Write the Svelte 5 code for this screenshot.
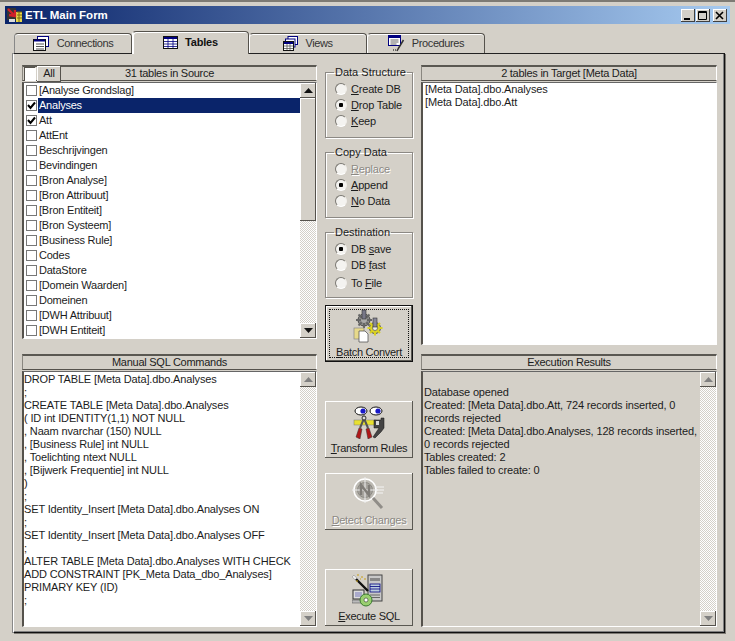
<script>
  const tables = [
    ['[Analyse Grondslag]', false], ['Analyses', true], ['Att', true], ['AttEnt', false],
    ['Beschrijvingen', false], ['Bevindingen', false], ['[Bron Analyse]', false], ['[Bron Attribuut]', false],
    ['[Bron Entiteit]', false], ['[Bron Systeem]', false], ['[Business Rule]', false], ['Codes', false],
    ['DataStore', false], ['[Domein Waarden]', false], ['Domeinen', false], ['[DWH Attribuut]', false], ['[DWH Entiteit]', false]
  ];
  const sql = ['DROP TABLE [Meta Data].dbo.Analyses', ';', 'CREATE TABLE [Meta Data].dbo.Analyses', '( ID int IDENTITY(1,1) NOT NULL', ', Naam nvarchar (150) NULL', ', [Business Rule] int NULL', ', Toelichting ntext NULL', ', [Bijwerk Frequentie] int NULL', ')', ';', 'SET Identity_Insert [Meta Data].dbo.Analyses ON', ';', 'SET Identity_Insert [Meta Data].dbo.Analyses OFF', ';', 'ALTER TABLE [Meta Data].dbo.Analyses WITH CHECK', 'ADD CONSTRAINT [PK_Meta Data_dbo_Analyses]', 'PRIMARY KEY (ID)', ';'];
  const results = ['', 'Database opened', 'Created: [Meta Data].dbo.Att, 724 records inserted, 0', 'records rejected', 'Created: [Meta Data].dbo.Analyses, 128 records inserted,', '0 records rejected', 'Tables created: 2', 'Tables failed to create: 0'];
</script>

{#snippet arrow(dir, off)}
  <span class="sbtn" class:off>
    <svg width="9" height="5" viewBox="0 0 9 5">
      {#if dir === 'up'}<path d="M4.5 0 L9 5 H0 Z" fill={off ? '#808080' : '#111'} />
      {:else}<path d="M0 0 H9 L4.5 5 Z" fill={off ? '#808080' : '#111'} />{/if}
    </svg>
  </span>
{/snippet}

{#snippet radio(on, dis, pre, key, post, cls = '')}
  <div class="radio {cls}" class:dis>
    <span class="dot" class:on></span>
    <span class="rlabel">{pre}<u>{key}</u>{post}</span>
  </div>
{/snippet}

<div class="window">
  <header class="title">
    <svg class="appicon" width="16" height="16" viewBox="0 0 16 16">
      <rect x="0" y="1" width="9" height="12" fill="#333" />
      <rect x="9" y="5" width="6" height="10" fill="#e8d84a" />
      <path d="M10 5h5M10 8h5M10 11h5M12 5v10" stroke="#7a6a10" stroke-width="1" />
      <path d="M1 2 L8 9 M2 8 L8 9 L8 3" stroke="#d0202a" stroke-width="2.4" fill="none" />
      <rect x="2" y="12" width="6" height="3" fill="#ddd" />
    </svg>
    <span class="ttext">ETL Main Form</span>
    <div class="wbtns">
      <span class="wbtn"><svg width="13" height="13"><rect x="3" y="9" width="6" height="2" fill="#000" /></svg></span>
      <span class="wbtn"><svg width="13" height="13"><path d="M2.5 2.5h8v8h-8z M2 3.5h9" fill="none" stroke="#000" /></svg></span>
      <span class="wbtn gap"><svg width="13" height="13"><path d="M3 3l7 7M10 3l-7 7" stroke="#000" stroke-width="1.6" /></svg></span>
    </div>
  </header>

  <nav class="tabs">
    <div class="tab first">
      <svg width="17" height="15" viewBox="0 0 17 15"><rect x="4.5" y=".5" width="11" height="10" fill="#fff" stroke="#000080" /><rect x=".5" y="3.5" width="12" height="11" fill="#fff" stroke="#111" /><path d="M1 4.5h11" stroke="#000080" stroke-width="2" /><path d="M3 8h8M3 10.500h8M3 13h8" stroke="#555" /></svg>
      <span>Connections</span>
    </div>
    <div class="tab active">
      <svg width="15" height="13" viewBox="0 0 15 13"><rect x=".5" y=".5" width="14" height="12" fill="#fff" stroke="#111" /><rect x="1" y="1" width="13" height="2" fill="#000080" /><path d="M1 5.500h13M1 8h13M1 10.500h13M5 3v9M10 3v9" stroke="#000080" stroke-width=".8" /></svg>
      <span>Tables</span>
    </div>
    <div class="tab">
      <svg width="15" height="15" viewBox="0 0 15 15"><rect x="5" y=".5" width="9.500" height="8" fill="#fff" stroke="#000080" /><rect x="2.500" y="3" width="9.500" height="8" fill="#fff" stroke="#000080" /><rect x=".5" y="5.500" width="10" height="9" fill="#fff" stroke="#111" /><path d="M1 7h9" stroke="#000080" stroke-width="2" /><path d="M1 10h9M1 12.500h9M4 8v6M7 8v6" stroke="#555" stroke-width=".8" /></svg>
      <span>Views</span>
    </div>
    <div class="tab">
      <svg width="17" height="17" viewBox="0 0 17 17"><rect x=".5" y=".5" width="12" height="10" fill="#fff" stroke="#000080" /><path d="M1 2h11" stroke="#000080" stroke-width="2" /><path d="M2.500 5h8M2.500 7h8M2.500 9h6" stroke="#666" /><path d="M10 14 L15.500 5 M10 14 l-1 2" stroke="#333" stroke-width="1.500" /><path d="M5 15h1M7 15h1" stroke="#000" /></svg>
      <span>Procedures</span>
    </div>
  </nav>

  <main class="panel">
    <section class="left">
      <div class="head">
        <span class="allcheck"></span>
        <span class="allbtn">All</span>
        <span class="headtext">31 tables in Source</span>
      </div>
      <div class="box srclist">
        <ul>
          {#each tables as [name, on]}
            <li>
              <span class="check">
                {#if on}<svg width="9" height="9" viewBox="0 0 9 9"><path d="M1 4 L3.500 7 L8 1.500" fill="none" stroke="#000" stroke-width="2" /></svg>{/if}
              </span>
              <span class="iname" class:sel={name === 'Analyses'}>{name}</span>
            </li>
          {/each}
        </ul>
        <div class="scroll">
          {@render arrow('up', false)}
          <span class="thumb"></span>
          <span class="track"></span>
          {@render arrow('down', false)}
        </div>
      </div>

      <div class="head lower"><span class="headtext">Manual SQL Commands</span></div>
      <div class="box bigbox">
        <div class="lines">{#each sql as l}<div class="line">{l}</div>{/each}</div>
        <div class="scroll">
          {@render arrow('up', true)}
          <span class="track"></span>
          {@render arrow('down', true)}
        </div>
      </div>
    </section>

    <section class="mid">
      <fieldset class="first-group">
        <legend>Data Structure</legend>
        {@render radio(false, false, '', 'C', 'reate DB')}
        {@render radio(true, false, '', 'D', 'rop Table')}
        {@render radio(false, false, '', 'K', 'eep')}
      </fieldset>
      <fieldset>
        <legend>Copy Data</legend>
        {@render radio(false, true, '', 'R', 'eplace')}
        {@render radio(true, false, '', 'A', 'ppend')}
        {@render radio(false, false, '', 'N', 'o Data')}
      </fieldset>
      <fieldset>
        <legend>Destination</legend>
        {@render radio(true, false, 'DB ', 's', 'ave')}
        {@render radio(false, false, 'DB ', 'f', 'ast')}
        {@render radio(false, false, 'To ', 'F', 'ile', 'lastr')}
      </fieldset>

      <div class="btn default">
        <svg width="34" height="34" viewBox="0 0 34 34">
          <circle cx="12" cy="11" r="6" fill="#8a8a8a" stroke="#444" />
          <path d="M12 3v16M4 11h16M6.500 5.500l11 11M17.500 5.500l-11 11" stroke="#666" stroke-width="2" />
          <circle cx="12" cy="11" r="3" fill="#aaa" />
          <circle cx="23" cy="19" r="5.500" fill="#e4dc30" stroke="#555" />
          <path d="M23 11.500v15M15.500 19h15M18 14l10 10M28 14l-10 10" stroke="#d8d020" stroke-width="2" />
          <circle cx="23" cy="19" r="2.500" fill="#eee" stroke="#555" stroke-width=".7" />
          <rect x="10" y="1" width="4" height="9" fill="#778" stroke="#333" stroke-width=".6" />
          <rect x="21" y="9" width="4" height="9" fill="#889" stroke="#333" stroke-width=".6" />
          <rect x="2" y="19" width="10" height="11" fill="#e7d98a" stroke="#888" stroke-width=".7" />
          <path d="M7 22h6l3 3v8H7z" fill="#fff" stroke="#555" stroke-width=".8" />
        </svg>
        <span class="btxt"><u>B</u>atch Convert</span>
      </div>
      <div class="btn transform">
        <svg width="34" height="34" viewBox="0 0 34 34">
          <ellipse cx="9" cy="6" rx="6" ry="4" fill="#fff" stroke="#111" />
          <ellipse cx="24" cy="6" rx="6" ry="4" fill="#fff" stroke="#111" />
          <circle cx="11" cy="6" r="2.600" fill="#1818c8" />
          <circle cx="26" cy="6" r="2.600" fill="#1818c8" />
          <rect x="2" y="15" width="22" height="5" fill="#e8e030" stroke="#777" stroke-width=".5" />
          <path d="M13 11 L8 23 M11 11 L16 23" stroke="#555" stroke-width="2" fill="none" />
          <circle cx="12" cy="13" r="2" fill="#ddd" stroke="#333" />
          <path d="M7 23 L4 32 L8 34 L10 24 Z M17 23 L20 32 L16 34 L14 24 Z" fill="#b01818" stroke="#333" stroke-width=".5" />
          <path d="M22 15h7v-2h3v10l-3 4-6 6-2-1 6-9h-5z" fill="#444" stroke="#111" stroke-width=".5" />
          <rect x="24" y="16" width="3" height="4" fill="#ddd" />
        </svg>
        <span class="btxt"><u>T</u>ransform Rules</span>
      </div>
      <div class="btn disabled detect">
        <svg width="34" height="34" viewBox="0 0 34 34">
          <circle cx="13" cy="13" r="11" fill="#bdbab3" stroke="#fff" stroke-width="1.500" />
          <circle cx="13" cy="13" r="7.500" fill="#a8a59f" stroke="#8c8a84" />
          <path d="M13 0v26M0 13h26" stroke="#efefef" />
          <path d="M9 18V8l8 10V8" fill="none" stroke="#807d78" stroke-width="2.400" />
          <path d="M21 21 L30 31" stroke="#908d88" stroke-width="3" />
          <path d="M23 10h9M24 13h8M24 16h7" stroke="#f4f4f4" />
        </svg>
        <span class="btxt"><u>D</u>etect Changes</span>
      </div>
      <div class="btn execute">
        <svg width="34" height="34" viewBox="0 0 34 34">
          <rect x="16" y="2" width="14" height="26" fill="#c8c8c8" stroke="#444" />
          <rect x="18" y="5" width="10" height="3" fill="#888" />
          <rect x="18" y="11" width="10" height="8" fill="#bcd" stroke="#000080" stroke-width=".8" />
          <path d="M18 13.500h10M18 16h10" stroke="#000080" stroke-width=".8" />
          <path d="M18 22h10M18 24.500h10" stroke="#666" />
          <rect x="1" y="17" width="11" height="9" fill="#ddd" stroke="#333" />
          <rect x="3" y="19" width="7" height="5" fill="#aac" />
          <rect x="0" y="27" width="13" height="3" fill="#bbb" stroke="#444" stroke-width=".5" />
          <path d="M1 3 L16 18" stroke="#111" stroke-width="2.400" />
          <path d="M1 3 L4 6" stroke="#eee" stroke-width="2.400" />
          <path d="M6 1v2M10 3v2M4 8h2M12 6h2M8 6h1" stroke="#c8a018" />
          <circle cx="14" cy="27" r="6" fill="#9acf70" stroke="#3a7a30" />
          <circle cx="14" cy="27" r="2" fill="#fff" stroke="#333" stroke-width=".6" />
        </svg>
        <span class="btxt"><u>E</u>xecute SQL</span>
      </div>
    </section>

    <section class="right">
      <div class="head"><span class="headtext">2 tables in Target [Meta Data]</span></div>
      <div class="box tgt">
        <div class="line">[Meta Data].dbo.Analyses</div>
        <div class="line">[Meta Data].dbo.Att</div>
      </div>
      <div class="head lower2"><span class="headtext">Execution Results</span></div>
      <div class="box bigbox grey">
        <div class="lines">{#each results as l}<div class="line">{l}&nbsp;</div>{/each}</div>
        <div class="scroll">
          {@render arrow('up', true)}
          <span class="track"></span>
          {@render arrow('down', true)}
        </div>
      </div>
    </section>
  </main>
</div>

<style>
  :global(body) { margin: 0; background: #d4d0c8; }
  .window {
    width: 735px; height: 641px; box-sizing: border-box; overflow: hidden;
    background: #d4d0c8; color: #1c1c1c;
    font: 11px/13px "Liberation Sans", Arial, sans-serif;
    border-top: 2px solid #7d7a74;
    padding: 4px 5px 0;
    display: flex; flex-direction: column;
  }
  .title {
    height: 18px; flex: none; display: flex; align-items: center;
    background: linear-gradient(90deg, #0a246a 0%, #a6caf0 100%);
    color: #fff; font-weight: bold; font-size: 11.5px;
    padding: 0 3px 0 2px;
  }
  .appicon { margin-right: 2px; }
  .ttext { flex: 1; }
  .wbtns { display: flex; }
  .wbtn {
    width: 14px; height: 13px; display: block; background: #d4d0c8; margin-left: 1px;
    box-shadow: inset -1px -1px 0 #404040, inset 1px 1px 0 #fff;
  }
  .wbtn.gap { margin-left: 3px; }
  .wbtn svg { display: block; }

  .tabs {
    display: flex; align-items: flex-end; height: 29px; flex: none; margin-left: 9px;
  }
  .tab {
    width: 118px; height: 20px; box-sizing: border-box; display: flex; align-items: center; justify-content: center; gap: 7px;
    border: 1px solid #55524c; border-bottom: 0; border-left-color: #fff; border-radius: 4px 4px 0 0;
    box-shadow: inset 0 1px 0 #fff; color: #333; letter-spacing: -.4px;
  }
  .tab.first { border-left-color: #888; }
  .tab.active {
    width: 117px; height: 23px; margin-bottom: -1px; position: relative; z-index: 1;
    background: #d4d0c8; font-weight: bold; color: #111; padding-bottom: 1px; letter-spacing: -.2px;
    box-shadow: inset 1px 1px 0 #fff;
  }
  .panel {
    height: 580px; flex: none; box-sizing: border-box; width: 712px; margin-left: 8px;
    border-top: 1px solid #222; border-left: 1px solid #fff; border-right: 1px solid #111; border-bottom: 1px solid #111;
    box-shadow: 1px 1px 0 #7d7a74, inset -1px -1px 0 #808080, -1px 0 0 #888;
    padding: 11px 7px 0 8px;
    display: grid; grid-template-columns: 295px 88px 296px; column-gap: 8px; align-items: start;
  }
  .left, .right, .mid { display: flex; flex-direction: column; }

  .head {
    height: 16px; box-sizing: border-box; display: flex; align-items: center; position: relative;
    border-top: 2px solid #5a5852; border-left: 1px solid #8a8780; border-right: 1px solid #fff; border-bottom: 1px solid #55524c;
    letter-spacing: -.26px;
  }
  .head.lower { margin-top: 15px; }
  .head.lower2 { margin-top: 9px; }
  .headtext { position: absolute; left: 0; right: 0; text-align: center; }
  .allcheck {
    width: 11px; height: 13px; margin: -1px 0 0 1px; background: #fff; z-index: 1;
    box-shadow: inset 1px 1px 0 #55524c, 1px 1px 0 #fff;
  }
  .allbtn {
    z-index: 1; height: 16px; width: 24px; margin: -2px 0 -2px 2px; line-height: 15px; text-align: center; background: #d4d0c8;
    box-shadow: inset -1px -1px 0 #55524c, inset 1px 1px 0 #fff;
  }

  .box {
    background: #fff; box-sizing: border-box; margin-top: 1px; display: flex;
    border-top: 1px solid #666; border-left: 2px solid #55524c; border-right: 1px solid #fff; border-bottom: 1px solid #fff;
    letter-spacing: -.14px;
  }
  .srclist { height: 257px; }
  .tgt { height: 263px; display: block; padding: 0 2px; }
  .bigbox { height: 256px; }
  .bigbox.grey { background: #d4d0c8; }
  .bigbox.grey .lines { padding-left: 1px; }
  ul { list-style: none; margin: 0; padding: 0; flex: 1; min-width: 0; letter-spacing: -.22px; }
  li { height: 15px; display: flex; align-items: center; }
  .check {
    width: 11px; height: 11px; box-sizing: border-box; margin: 0 1px 0 2px; background: #fff; flex: none;
    border: 1px solid #777; display: flex; align-items: center; justify-content: center;
  }
  .check svg { display: block; }
  .iname { flex: 1; padding-left: 1px; height: 15px; line-height: 15px; }
  .iname.sel { background: #0a246a; color: #fff; }
  .lines { flex: 1; min-width: 0; padding: 1px 0 0 0; }
  .line { height: 13px; white-space: nowrap; }

  .scroll { width: 16px; flex: none; display: flex; flex-direction: column; }
  .sbtn {
    height: 15px; flex: none; display: flex; align-items: center; justify-content: center; background: #d4d0c8;
    box-shadow: inset -1px -1px 0 #55524c, inset 1px 1px 0 #fff;
  }
  .sbtn svg { display: block; }
  .thumb {
    height: 123px; flex: none; background: #d4d0c8;
    box-shadow: inset -1px -1px 0 #55524c, inset 1px 1px 0 #fff;
  }
  .track { flex: 1; background: repeating-conic-gradient(#d4d0c8 0 25%, #fff 0 50%) 0 0 / 2px 2px; }

  fieldset {
    margin: 0 0 8px; padding: 0; height: 72px; box-sizing: border-box; min-width: 0; width: 88px;
    border: 1px solid #8c8984; box-shadow: 1px 1px 0 #fff, inset 1px 1px 0 #fff;
  }
  fieldset.first-group { margin-top: 1px; }
  legend { padding: 0 1px; margin-left: 8px; line-height: 13px; }
  .radio { height: 16px; display: flex; align-items: center; padding-left: 9px; gap: 4px; letter-spacing: -.2px; }
  .radio:first-of-type { margin-top: 2px; }
  .radio.lastr { margin-top: 2px; }
  .radio.dis { color: #8c8984; text-shadow: 1px 1px 0 #fff; }
  .dot {
    width: 12px; height: 12px; border-radius: 50%; background: #f4f3f0; box-sizing: border-box; display: block; flex: none;
    border: 1px solid; border-color: #7a7872 #f0eee9 #fff #7a7872;
  }
  .dot.on { background: radial-gradient(circle, #000 0 2px, #f4f3f0 2.500px); }

  .btn {
    width: 88px; height: 57px; box-sizing: border-box; display: flex; flex-direction: column; align-items: center; flex: none;
    padding-top: 4px; background: #d4d0c8; white-space: nowrap; letter-spacing: -.3px;
    box-shadow: inset -1px -1px 0 #5a5852, inset 1px 1px 0 #fff;
  }
  .btn svg { display: block; height: 34px; flex: none; }
  .btxt { margin-top: 3px; line-height: 13px; }
  .btn.default {
    margin-top: -1px;
    box-shadow: 0 0 0 1px #111 inset, inset -2px -2px 0 #5a5852, inset 2px 2px 0 #fff;
    outline: 1px dotted #111; outline-offset: -5px;
  }
  .btn.transform { margin-top: 39px; }
  .btn.detect { margin-top: 15px; }
  .btn.execute { margin-top: 39px; }
  .btn.disabled { color: #8c8984; text-shadow: 1px 1px 0 #fff; }
</style>
